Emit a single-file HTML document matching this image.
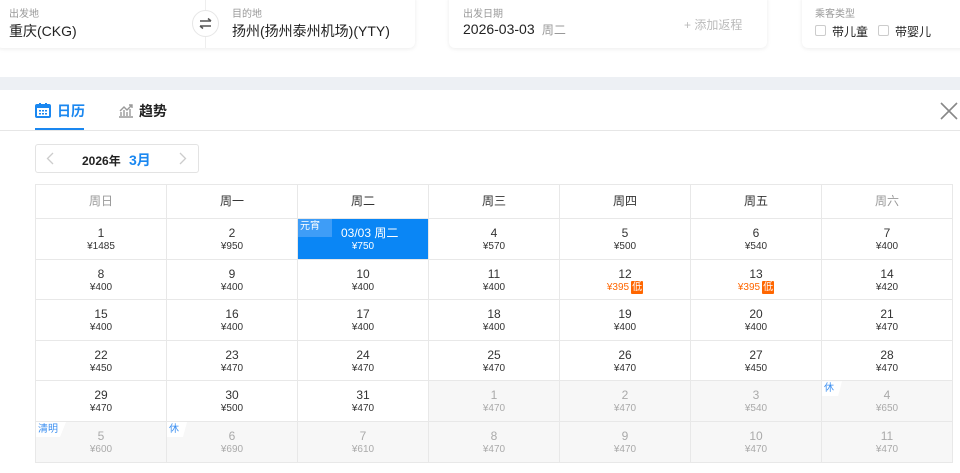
<!DOCTYPE html>
<html><head><meta charset="utf-8"><style>
*{margin:0;padding:0;box-sizing:border-box}
body{width:960px;height:473px;overflow:hidden;background:#fff;font-family:"Liberation Sans","Noto Sans CJK SC",sans-serif;color:#333;position:relative}
.card{position:absolute;background:#fff;border-radius:0 0 6px 6px;box-shadow:0 1px 4px rgba(0,0,0,.08)}
.lbl{position:absolute;font-size:10px;color:#999}
.val{position:absolute;font-size:14px;color:#222}
.band{position:absolute;left:0;top:77px;width:960px;height:13px;background:#edf0f4}
.grid{position:absolute;left:35px;top:184px;display:grid;grid-template-columns:repeat(7,131px);grid-template-rows:34px repeat(6,40.6px);border-left:1px solid #e8e8e8;border-top:1px solid #e8e8e8}
.grid div{border-right:1px solid #e8e8e8;border-bottom:1px solid #e8e8e8;text-align:center;font-size:12px;position:relative}
.h{line-height:33px;color:#333;font-weight:normal}
.c{padding-top:7px;line-height:14px}
.c b{display:block;font-weight:normal;font-size:12px;color:#333}
.c i{display:block;font-style:normal;font-size:10px;color:#333}
.g{background:#f7f7f7}
.g b,.g i{color:#aaa!important}
.lo{color:#f60!important}
.lo span{display:inline-block;background:#f60;color:#fff;font-size:10px;line-height:13px;padding:0 1px;margin-left:2px;border-radius:1px}
.tag{position:absolute;left:0;top:0;font-size:10px;color:#3a8ef0;background:#fff;padding:1px 8px 1px 2px;line-height:13px;clip-path:polygon(0 0,100% 0,80% 100%,0 100%)}
.sel{background:#0a86f5;color:#fff}
.sel b,.sel i{color:#fff!important}
</style></head><body>
<div class="card" style="left:-4px;top:-4px;width:419px;height:52px"></div>
<div class="lbl" style="left:9px;top:5px">出发地</div>
<div class="val" style="left:9px;top:21px">重庆(CKG)</div>
<div style="position:absolute;left:205px;top:0;width:1px;height:48px;background:#eee"></div>
<div style="position:absolute;left:192px;top:10px;width:27px;height:27px;border-radius:50%;background:#fff;border:1px solid #e6e6e6"></div>
<svg style="position:absolute;left:198px;top:16px" width="15" height="15" viewBox="0 0 15 15"><path d="M2 5H13M10 2.5L13 5M13 10H2M5 12.5L2 10" fill="none" stroke="#555" stroke-width="1.5"/></svg>
<div class="lbl" style="left:232px;top:5px">目的地</div>
<div class="val" style="left:232px;top:21px">扬州(扬州泰州机场)(YTY)</div>
<div class="card" style="left:449px;top:-4px;width:318px;height:52px"></div>
<div class="lbl" style="left:463px;top:5px">出发日期</div>
<div class="val" style="left:463px;top:21px">2026-03-03 <span style="font-size:12px;color:#999">&nbsp;周二</span></div>
<div style="position:absolute;left:684px;top:16px;font-size:12px;color:#bbb">+ 添加返程</div>
<div class="card" style="left:802px;top:-4px;width:170px;height:52px"></div>
<div class="lbl" style="left:815px;top:5px">乘客类型</div>
<div style="position:absolute;left:815px;top:25px;width:11px;height:11px;border:1px solid #ccc;border-radius:2px"></div>
<div style="position:absolute;left:832px;top:23px;font-size:12px;color:#222">带儿童</div>
<div style="position:absolute;left:878px;top:25px;width:11px;height:11px;border:1px solid #ccc;border-radius:2px"></div>
<div style="position:absolute;left:895px;top:23px;font-size:12px;color:#222">带婴儿</div>
<div class="band"></div>
<svg style="position:absolute;left:35px;top:102px" width="16" height="16" viewBox="0 0 16 16"><rect x="1" y="3" width="14" height="12" rx="1" fill="none" stroke="#1a87f0" stroke-width="2"/><rect x="1" y="3" width="14" height="3" fill="#1a87f0"/><rect x="4" y="1" width="2" height="3" fill="#1a87f0"/><rect x="10" y="1" width="2" height="3" fill="#1a87f0"/><g fill="#1a87f0"><rect x="4" y="8" width="2" height="1.5"/><rect x="7" y="8" width="2" height="1.5"/><rect x="10" y="8" width="2" height="1.5"/><rect x="4" y="11" width="2" height="1.5"/><rect x="7" y="11" width="2" height="1.5"/><rect x="10" y="11" width="2" height="1.5"/></g></svg>
<div style="position:absolute;left:57px;top:101px;font-size:14px;font-weight:bold;color:#1a87f0">日历</div>
<div style="position:absolute;left:35px;top:128px;width:49px;height:2px;background:#1a87f0"></div>
<svg style="position:absolute;left:118px;top:102px" width="16" height="16" viewBox="0 0 16 16"><path d="M1 15H15M3 14V10M6 14V8M9 14V10M12 14V7M2 9L6 5 9 8 14 3M11 3H14V6" fill="none" stroke="#999" stroke-width="1.4"/></svg>
<div style="position:absolute;left:139px;top:101px;font-size:14px;font-weight:bold;color:#222">趋势</div>
<div style="position:absolute;left:0;top:130px;width:960px;height:1px;background:#e6e6e6"></div>
<svg style="position:absolute;left:940px;top:102px" width="18" height="18" viewBox="0 0 18 18"><path d="M1 1L17 17M17 1L1 17" stroke="#888" stroke-width="1.6"/></svg>
<div style="position:absolute;left:35px;top:144px;width:164px;height:29px;border:1px solid #e3e3e3;border-radius:3px"></div>
<svg style="position:absolute;left:46px;top:152px" width="8" height="13" viewBox="0 0 8 13"><path d="M7 1L1.5 6.5 7 12" fill="none" stroke="#ccc" stroke-width="1.3"/></svg>
<div style="position:absolute;left:82px;top:152px;font-size:12px;font-weight:bold;color:#222">2026年</div>
<div style="position:absolute;left:129px;top:150px;font-size:14px;font-weight:bold;color:#1a87f0">3月</div>
<svg style="position:absolute;left:179px;top:152px" width="8" height="13" viewBox="0 0 8 13"><path d="M1 1L6.5 6.5 1 12" fill="none" stroke="#ccc" stroke-width="1.3"/></svg>
<div class="grid">
<div class="h" style="color:#999">周日</div><div class="h">周一</div><div class="h">周二</div><div class="h">周三</div><div class="h">周四</div><div class="h">周五</div><div class="h" style="color:#999">周六</div>
<div class="c"><b>1</b><i>¥1485</i></div><div class="c"><b>2</b><i>¥950</i></div><div class="c sel"><span class="tag" style="background:#3e9df7;color:#fff;clip-path:none;padding:1px 12px 4px 2px">元宵</span><b>&nbsp;&nbsp;&nbsp;&nbsp;03/03 周二</b><i>¥750</i></div><div class="c"><b>4</b><i>¥570</i></div><div class="c"><b>5</b><i>¥500</i></div><div class="c"><b>6</b><i>¥540</i></div><div class="c"><b>7</b><i>¥400</i></div>
<div class="c"><b>8</b><i>¥400</i></div><div class="c"><b>9</b><i>¥400</i></div><div class="c"><b>10</b><i>¥400</i></div><div class="c"><b>11</b><i>¥400</i></div><div class="c"><b>12</b><i class="lo">¥395<span>低</span></i></div><div class="c"><b>13</b><i class="lo">¥395<span>低</span></i></div><div class="c"><b>14</b><i>¥420</i></div>
<div class="c"><b>15</b><i>¥400</i></div><div class="c"><b>16</b><i>¥400</i></div><div class="c"><b>17</b><i>¥400</i></div><div class="c"><b>18</b><i>¥400</i></div><div class="c"><b>19</b><i>¥400</i></div><div class="c"><b>20</b><i>¥400</i></div><div class="c"><b>21</b><i>¥470</i></div>
<div class="c"><b>22</b><i>¥450</i></div><div class="c"><b>23</b><i>¥470</i></div><div class="c"><b>24</b><i>¥470</i></div><div class="c"><b>25</b><i>¥470</i></div><div class="c"><b>26</b><i>¥470</i></div><div class="c"><b>27</b><i>¥450</i></div><div class="c"><b>28</b><i>¥470</i></div>
<div class="c"><b>29</b><i>¥470</i></div><div class="c"><b>30</b><i>¥500</i></div><div class="c"><b>31</b><i>¥470</i></div><div class="c g"><b>1</b><i>¥470</i></div><div class="c g"><b>2</b><i>¥470</i></div><div class="c g"><b>3</b><i>¥540</i></div><div class="c g"><span class="tag">休</span><b>4</b><i>¥650</i></div>
<div class="c g"><span class="tag">清明</span><b>5</b><i>¥600</i></div><div class="c g"><span class="tag">休</span><b>6</b><i>¥690</i></div><div class="c g"><b>7</b><i>¥610</i></div><div class="c g"><b>8</b><i>¥470</i></div><div class="c g"><b>9</b><i>¥470</i></div><div class="c g"><b>10</b><i>¥470</i></div><div class="c g"><b>11</b><i>¥470</i></div>
</div>
</body></html>
